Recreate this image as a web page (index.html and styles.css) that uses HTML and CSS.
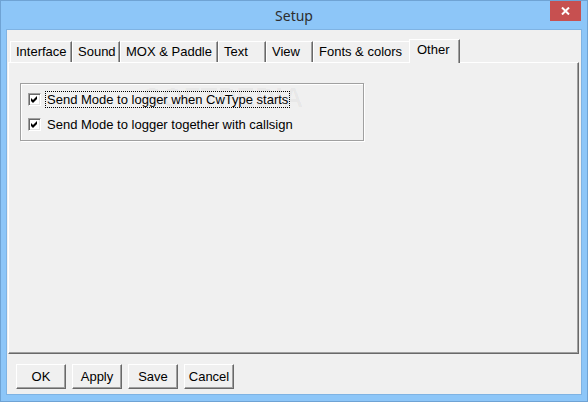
FILE: index.html
```
<!DOCTYPE html>
<html>
<head>
<meta charset="utf-8">
<title>Setup</title>
<link rel="stylesheet" href="styles.css">
</head>
<body>
<div class="window">
  <div class="titlebar">
    <span class="title">Setup</span>
    <button class="close" aria-label="Close">
      <svg width="9" height="8" viewBox="0 0 9 8"><path d="M1 0.5 L8 7.5 M8 0.5 L1 7.5" stroke="#fff" stroke-width="2" fill="none"/></svg>
    </button>
  </div>
  <div class="client">
    <div class="tabs">
      <div class="tab w-interface">Interface</div>
      <div class="tab w-sound">Sound</div>
      <div class="tab w-mox">MOX &amp; Paddle</div>
      <div class="tab w-text">Text</div>
      <div class="tab w-view">View</div>
      <div class="tab w-fonts">Fonts &amp; colors</div>
      <div class="tab w-other active">Other</div>
    </div>
    <div class="panel">
      <div class="group">
        <span class="watermark">SOFTPEDIA</span>
        <label class="check">
          <span class="box"><svg width="7" height="7" viewBox="0 0 7 7"><path d="M0 2 L2 4 L6 0 L6 3 L2 7 L0 5 Z" fill="#000"/></svg></span>
          <span class="label focus">Send Mode to logger when CwType starts</span>
        </label>
        <label class="check">
          <span class="box"><svg width="7" height="7" viewBox="0 0 7 7"><path d="M0 2 L2 4 L6 0 L6 3 L2 7 L0 5 Z" fill="#000"/></svg></span>
          <span class="label">Send Mode to logger together with callsign</span>
        </label>
      </div>
    </div>
    <div class="buttons">
      <button class="btn">OK</button>
      <button class="btn">Apply</button>
      <button class="btn">Save</button>
      <button class="btn">Cancel</button>
    </div>
  </div>
</div>
</body>
</html>
```
FILE: styles.css
```
* { box-sizing: border-box; }
html, body { margin: 0; padding: 0; }
body {
  width: 588px;
  height: 402px;
  overflow: hidden;
  font-family: "Liberation Sans", Arial, sans-serif;
  font-size: 13px;
  color: #000;
}
.window {
  width: 588px;
  height: 402px;
  background: #8dc6f8;
  border: 1px solid #6fa3d4;
  display: flex;
  flex-direction: column;
}
.titlebar {
  height: 29px;
  display: grid;
  grid-template-columns: 1fr auto 1fr;
}
.title {
  grid-column: 2;
  font-family: "Noto Sans", "Open Sans", sans-serif;
  font-size: 14px;
  line-height: 20px;
  padding-top: 5px;
  color: #2e2e2e;
}
.close {
  grid-column: 3;
  justify-self: end;
  align-self: start;
  width: 31px;
  height: 20px;
  margin-right: 6px;
  background: #c75050;
  border: 0;
  padding: 0;
  display: flex;
  align-items: center;
  justify-content: center;
}
.close svg { display: block; }
.client {
  margin: 0 6px;
  height: 364px;
  background: #f0f0f0;
  display: flex;
  flex-direction: column;
  box-shadow: 0 0 0 1px #7fb3e3;
}
.tabs {
  display: flex;
  align-items: flex-end;
  height: 32px;
  padding-left: 3px;
}
.tab {
  height: 21px;
  border-top: 1px solid #fff;
  border-left: 1px solid #fff;
  border-right: 1px solid #696969;
  box-shadow: inset -1px 0 #a0a0a0;
  padding: 2px 0 0 5px;
  line-height: 15px;
  white-space: nowrap;
  flex: none;
}
.w-interface { width: 62px; }
.w-sound { width: 48px; }
.w-mox { width: 98px; }
.w-text { width: 48px; }
.w-view { width: 47px; }
.w-fonts { width: 98px; }
.w-other { width: 47px; }
.tab.active {
  width: 51px;
  height: 24px;
  margin: 0 -2px -1px -2px;
  padding-left: 7px;
  background: #f0f0f0;
  position: relative;
  z-index: 1;
}
.panel {
  margin: 0 2px 0 1px;
  height: 292px;
  border-top: 1px solid #fff;
  border-left: 1px solid #fff;
  border-right: 1px solid #696969;
  border-bottom: 1px solid #696969;
  box-shadow: inset -1px -1px #a0a0a0;
  padding: 20px 0 0 11px;
}
.group {
  width: 344px;
  height: 58px;
  border: 1px solid #a0a0a0;
  box-shadow: inset 1px 1px #fff, 1px 1px #fff;
  padding: 7px 0 0 7px;
  display: flex;
  flex-direction: column;
  gap: 8px;
  position: relative;
}
.watermark {
  position: absolute;
  left: 122px;
  top: -2px;
  font-weight: bold;
  font-size: 28px;
  color: rgba(0, 0, 0, 0.035);
  pointer-events: none;
}
.check {
  display: flex;
  align-items: center;
  height: 17px;
  position: relative;
}
.box {
  width: 13px;
  height: 13px;
  background: #fff;
  border: 1px solid;
  border-color: #a0a0a0 #fff #fff #a0a0a0;
  box-shadow: inset 1px 1px #696969, inset -1px -1px #e3e3e3;
  margin-right: 4px;
  display: flex;
  align-items: center;
  justify-content: center;
}
.box svg { display: block; }
.label {
  border: 1px dotted transparent;
  padding: 0 1px;
  line-height: 15px;
}
.label.focus { border-color: #000; }
.buttons {
  display: flex;
  gap: 6px;
  padding: 10px 0 0 9px;
}
.btn {
  width: 50px;
  height: 25px;
  background: #f0f0f0;
  border: 1px solid;
  border-color: #fff #696969 #696969 #fff;
  box-shadow: inset -1px -1px #a0a0a0;
  font-family: "Liberation Sans", Arial, sans-serif;
  font-size: 13px;
  color: #000;
  padding: 0;
}
```
